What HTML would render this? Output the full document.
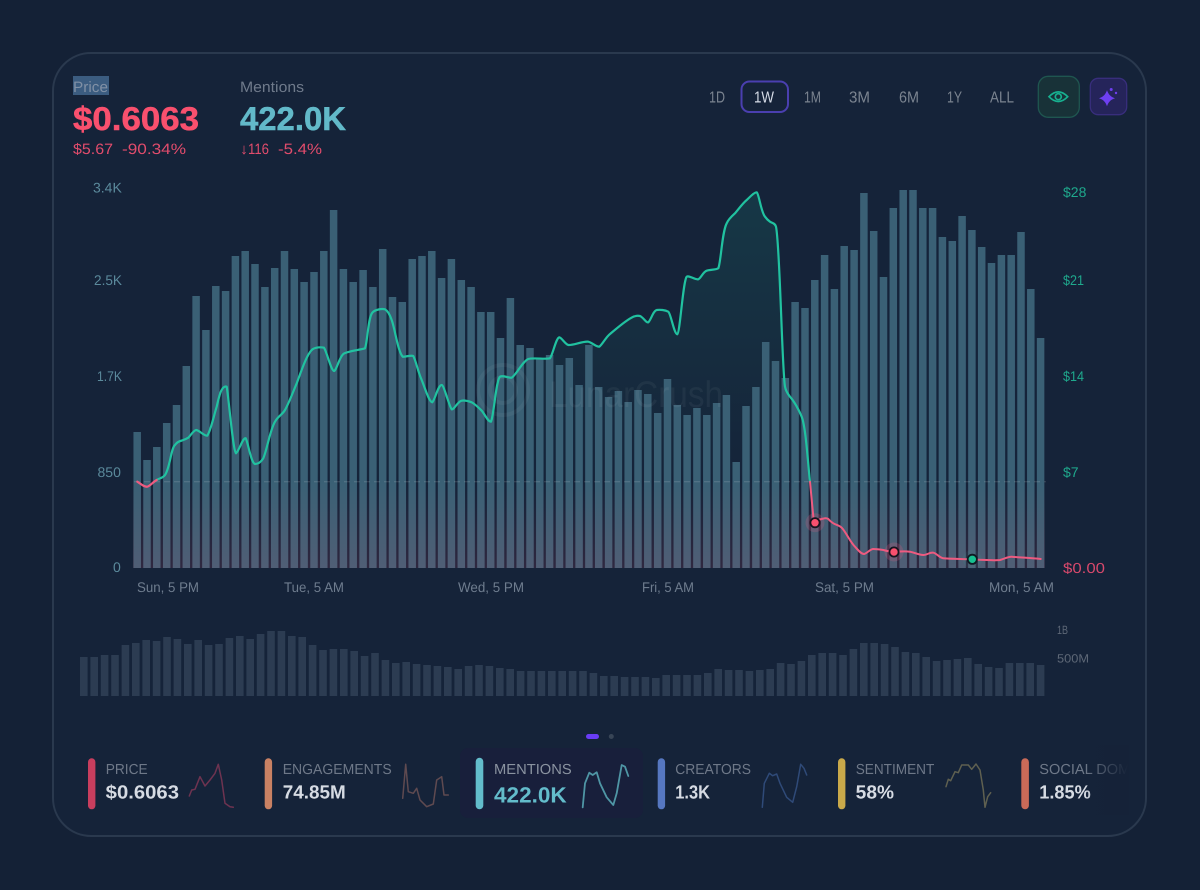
<!DOCTYPE html>
<html lang="en"><head><meta charset="utf-8"><title>Price and Mentions</title>
<style>
html,body{margin:0;padding:0;background:#142136;width:1200px;height:890px;overflow:hidden}
svg{display:block}
text{font-family:"Liberation Sans",sans-serif;text-rendering:geometricPrecision}
</style></head><body>
<svg width="1200" height="890" viewBox="0 0 1200 890" xmlns="http://www.w3.org/2000/svg">
<defs>
<linearGradient id="area" x1="0" y1="192" x2="0" y2="482" gradientUnits="userSpaceOnUse"><stop offset="0" stop-color="#20c4a0" stop-opacity=".13"/><stop offset="1" stop-color="#20c4a0" stop-opacity="0"/></linearGradient>
<linearGradient id="pink" x1="0" y1="482" x2="0" y2="568" gradientUnits="userSpaceOnUse"><stop offset="0" stop-color="#ff5078" stop-opacity="0"/><stop offset="1" stop-color="#ff5078" stop-opacity=".11"/></linearGradient>
<linearGradient id="fade" x1="1085" y1="0" x2="1128" y2="0" gradientUnits="userSpaceOnUse"><stop offset="0" stop-color="#152238" stop-opacity="0"/><stop offset="1" stop-color="#152238"/></linearGradient>
<clipPath id="row"><rect x="60" y="740" width="1068" height="90"/></clipPath>
</defs>
<rect width="1200" height="890" fill="#142136"/>
<rect x="53" y="53" width="1093" height="783" rx="38" fill="#152339" stroke="#2a394e" stroke-width="2"/>

<!-- header -->
<rect x="73" y="76" width="36" height="19" fill="#3b5c80"/>
<text x="73" y="92" font-size="15" fill="#8090a5" textLength="35" lengthAdjust="spacingAndGlyphs">Price</text>
<text x="240" y="92" font-size="15" fill="#6f7a8b" textLength="64" lengthAdjust="spacingAndGlyphs">Mentions</text>
<text x="73" y="130" font-size="33" font-weight="700" fill="#f9506e" stroke="#f9506e" stroke-width=".5" textLength="126" lengthAdjust="spacingAndGlyphs">$0.6063</text>
<text x="240" y="130" font-size="33" font-weight="700" fill="#62b9c9" stroke="#62b9c9" stroke-width=".5" textLength="106" lengthAdjust="spacingAndGlyphs">422.0K</text>
<text x="73" y="154" font-size="15" fill="#e14c6c" textLength="40" lengthAdjust="spacingAndGlyphs">$5.67</text>
<text x="122" y="154" font-size="15" fill="#e14c6c" textLength="64" lengthAdjust="spacingAndGlyphs">-90.34%</text>
<text x="240" y="154" font-size="15" fill="#e14c6c" textLength="8" lengthAdjust="spacingAndGlyphs">↓</text>
<text x="248" y="154" font-size="15" fill="#e14c6c" textLength="21" lengthAdjust="spacingAndGlyphs">116</text>
<text x="278" y="154" font-size="15" fill="#e14c6c" textLength="44" lengthAdjust="spacingAndGlyphs">-5.4%</text>

<!-- time buttons -->
<g font-size="16" fill="#7b8490">
<text x="709" y="102.7" textLength="16" lengthAdjust="spacingAndGlyphs">1D</text>
<text x="804" y="102.7" textLength="17" lengthAdjust="spacingAndGlyphs">1M</text>
<text x="849" y="102.7" textLength="21" lengthAdjust="spacingAndGlyphs">3M</text>
<text x="899" y="102.7" textLength="20" lengthAdjust="spacingAndGlyphs">6M</text>
<text x="947" y="102.7" textLength="15" lengthAdjust="spacingAndGlyphs">1Y</text>
<text x="990" y="102.7" textLength="24" lengthAdjust="spacingAndGlyphs">ALL</text>
</g>
<rect x="741.5" y="81.5" width="46.5" height="30.5" rx="8" fill="none" stroke="#4a3fb0" stroke-width="2"/>
<text x="754" y="102.7" font-size="16" fill="#d5dbe6" textLength="20" lengthAdjust="spacingAndGlyphs">1W</text>
<rect x="1038.3" y="76.3" width="41" height="41" rx="10" fill="#183238" stroke="#1f5650" stroke-width="1.3"/>
<path d="M1049 96.7Q1058.3 87 1067.7 96.7Q1058.3 106.4 1049 96.7Z" fill="none" stroke="#17b08f" stroke-width="1.7"/>
<circle cx="1058.3" cy="96.7" r="3" fill="none" stroke="#17b08f" stroke-width="1.7"/>
<rect x="1090.3" y="78.3" width="36.4" height="36.4" rx="8" fill="#25245a" stroke="#382e7c" stroke-width="1.3"/>
<path d="M1107 90.3C1108.5 94.5 1110.5 96.8 1115 98.3C1110.5 99.8 1108.5 102 1107 106.3C1105.5 102 1103.5 99.8 1099 98.3C1103.5 96.8 1105.5 94.5 1107 90.3Z" fill="#6e3ff0"/>
<circle cx="1111.2" cy="89.5" r="1.5" fill="#6e3ff0"/><circle cx="1116" cy="93" r="1.2" fill="#6e3ff0"/>

<!-- axis labels -->
<g font-size="14" fill="#5b8a9c">
<text x="93" y="192.7">3.4K</text>
<text x="94" y="285" textLength="28" lengthAdjust="spacingAndGlyphs">2.5K</text>
<text x="97" y="381" textLength="25" lengthAdjust="spacingAndGlyphs">1.7K</text>
<text x="97.5" y="477">850</text>
<text x="113" y="572">0</text>
</g>
<g font-size="14" fill="#1fa98d">
<text x="1063" y="197">$28</text>
<text x="1063" y="285" textLength="21" lengthAdjust="spacingAndGlyphs">$21</text>
<text x="1063" y="381" textLength="21" lengthAdjust="spacingAndGlyphs">$14</text>
<text x="1063" y="477">$7</text>
</g>
<text x="1063" y="573" font-size="14.5" fill="#d8496c" textLength="42" lengthAdjust="spacingAndGlyphs">$0.00</text>
<g font-size="14" fill="#6e7c8e">
<text x="137" y="592" textLength="62" lengthAdjust="spacingAndGlyphs">Sun, 5 PM</text>
<text x="284" y="592" textLength="60" lengthAdjust="spacingAndGlyphs">Tue, 5 AM</text>
<text x="458" y="592" textLength="66" lengthAdjust="spacingAndGlyphs">Wed, 5 PM</text>
<text x="642" y="592" textLength="52" lengthAdjust="spacingAndGlyphs">Fri, 5 AM</text>
<text x="815" y="592" textLength="59" lengthAdjust="spacingAndGlyphs">Sat, 5 PM</text>
<text x="989" y="592" textLength="65" lengthAdjust="spacingAndGlyphs">Mon, 5 AM</text>
</g>

<!-- area under price -->
<path d="M137.3 481.7L165 475L175 445L180 441L188.3 437.7L196 430L207.3 435.7L216.7 406.7L221.7 390L226.7 386.7L236 453.3L245.7 438.3L255 464L263.3 458.3L275 421.7L285 410L296.7 383.3L311.7 350L324 347.7L334.3 371L343.3 354L365 348.3L372.3 312.7L385 309.3L391.7 320L402.7 356.7L413.3 356L421.7 380L432.3 402.3L441.7 385L451.7 409.3L461.7 400.7L481.7 410.7L491 421.7L500 376.7L511.7 377.7L528.3 359L550 358.3L559.3 337.3L568.3 345L588.3 341.7L599.3 346.7L610 334L633.3 316.7L640 316L648.3 322.3L656.7 310L668.3 311.7L677.3 334.3L686.7 276.7L698.3 279.3L706.7 270.7L718.3 268.3L726.7 223.3L735 213.3L746.7 200L756.7 192.3L765 216.7L770 221.7L776 226.7L785 386.7L790 396.7L801.7 416.7L810 481.7Z" fill="url(#area)"/>

<!-- main bars -->
<path fill="none" stroke="#3a6075" stroke-width="7.5" d="M137.2 432V568M147 460V568M156.8 447V568M166.7 423V568M176.5 405V568M186.3 366V568M196.1 296V568M205.9 330V568M215.8 286V568M225.6 291V568M235.4 256V568M245.2 251V568M255 264V568M264.9 287V568M274.7 268V568M284.5 251V568M294.3 269V568M304.1 282V568M314 272V568M323.8 251V568M333.6 210V568M343.4 269V568M353.2 282V568M363.1 270V568M372.9 287V568M382.7 249V568M392.5 297V568M402.3 302V568M412.2 259V568M422 256V568M431.8 251V568M441.6 278V568M451.4 259V568M461.3 280V568M471.1 287V568M480.9 312V568M490.7 312V568M500.5 338V568M510.4 298V568M520.2 345V568M530 348V568M539.8 358V568M549.6 355V568M559.5 365V568M569.3 358V568M579.1 385V568M588.9 345V568M598.7 387V568M608.6 397V568M618.4 391V568M628.2 402V568M638 390V568M647.8 394V568M657.7 413V568M667.5 379V568M677.3 405V568M687.1 415V568M696.9 408V568M706.8 415V568M716.6 403V568M726.4 395V568M736.2 462V568M746 406V568M755.9 387V568M765.7 342V568M775.5 361V568M785.3 378V568M795.1 302V568M805 308V568M814.8 280V568M824.6 255V568M834.4 289V568M844.2 246V568M854.1 250V568M863.9 193V568M873.7 231V568M883.5 277V568M893.3 208V568M903.2 190V568M913 190V568M922.8 208V568M932.6 208V568M942.4 237V568M952.3 241V568M962.1 216V568M971.9 230V568M981.7 247V568M991.5 263V568M1001.4 255V568M1011.2 255V568M1021 232V568M1030.8 289V568M1040.6 338V568"/>
<rect x="133" y="482" width="912" height="86" fill="url(#pink)"/>
<line x1="134" y1="481.7" x2="1046" y2="481.7" stroke="#fff" stroke-opacity=".16" stroke-width="1" stroke-dasharray="6 4"/>

<!-- watermark -->
<g opacity=".045" fill="none" stroke="#fff" stroke-width="4"><circle cx="503" cy="390" r="25"/><circle cx="503" cy="390" r="13"/></g>
<text x="549" y="407" font-size="37" fill="#fff" fill-opacity=".05" textLength="174" lengthAdjust="spacingAndGlyphs">LunarCrush</text>

<!-- price line -->
<g fill="none" stroke-width="2.2" stroke-linejoin="round" stroke-linecap="round">
<path stroke="#21c2a0" d="M156.7 480C160 478 163 478 165 475C170 468 171 448 175 445C177 442 180 441 182 440.5C185 439.5 187 438.5 188.3 437.7C191 435 193 431 196 430C199 430 204 436 207.3 435.7C211 430 214 415 216.7 406.7C218 401 220 392 221.7 390C223 387 225.5 386 226.7 386.7C229 400 233 451 236 453.3C239 451 243 437 245.7 438.3C248 442 251 463 255 464C258 464 261 462 263.3 458.3C267 450 270 430 275 421.7C278 416 282 415 285 410C289 403 293 392 296.7 383.3C301 372 306 356 311.7 350C315 347 321 347 324 347.7C327 352 331 371 334.3 371C337 369 339 358 343.3 354C347 351 360 350 365 348.3C367.5 342 368 318 372.3 312.7C375 309.5 382 308.5 385 309.3C388 311 390 315 391.7 320C395 329 398 352 402.7 356.7C405 357 411 355 413.3 356C416 361 418 372 421.7 380C425 388 429 402 432.3 402.3C435 400 438 385 441.7 385C444 385 449 406 451.7 409.3C454 410 458 401 461.7 400.7C465 400 468 401 471.7 402.3C475 404 478 407 481.7 410.7C484 413 488 422 491 421.7C494 415 496 380 500 376.7C503 375 508 378 511.7 377.7C516 375 523 361 528.3 359C533 357.5 546 359.5 550 358.3C553 354 556 338 559.3 337.3C562 338 565 344 568.3 345C573 345.5 583 341 588.3 341.7C592 342.5 596 347 599.3 346.7C602 345 606 337 610 334C616 329 626 320 633.3 316.7C636 315.7 638 315.5 640 316C643 317 646 323 648.3 322.3C651 320 653 311 656.7 310C660 309.5 665 310 668.3 311.7C671 314 674 334 677.3 334.3C680 333 683 281 686.7 276.7C689 275 695 280 698.3 279.3C701 278 703 272 706.7 270.7C710 269.5 716 270 718.3 268.3C721 262 722 232 726.7 223.3C728.5 219 732 216 735 213.3C739 208.5 743 203 746.7 200C749 198 754 192 756.7 192.3C759 194 761 212 765 216.7C767 219.5 769 221 770 221.7C772 223 775 223 776 226.7C780 245 782 370 785 386.7C786 392 788 394 790 396.7C794 401 799 410 801.7 416.7C806 428 808 465 810 481.7"/>
<path stroke="#ee5b80" d="M137.3 481.7C141 484 144 487 147.3 486.7C150 486 153 482 156.7 480"/>
<path stroke="#ee5b80" stroke-width="2" d="M810 481.7L813.3 516.7L815 522.7C817 520 819 519.5 821.7 519C824 518.5 826 517.5 828.3 519C830 521 832 522.5 833.3 523.3C836 525 839 525 841.7 527.7C846 532 850 542 855 546.7C858 550 861 554 864 554C867 553.5 870 549 873.3 549C877 549 880 549.5 883.3 550C887 551 891 552 894 552C899 551.5 905 551 910 551.7C914 552.5 919 555 923.3 555C927 555 930 552 933.3 552.7C937 553.5 939 557.5 943.3 558.3C952 559 963 559 972.3 559.3C977 560 982 560 986.7 560C991 560 996 560.5 1000 560C1004 559 1008 556.5 1011.7 556.7C1020 557.5 1031 558 1040.7 559"/>
</g>
<g>
<circle cx="815" cy="522.7" r="9.5" fill="#ee5b80" opacity=".2"/><circle cx="815" cy="522.7" r="4.6" fill="#f9506e" stroke="#16141f" stroke-width="1.8"/>
<circle cx="894" cy="552" r="9.5" fill="#ee5b80" opacity=".2"/><circle cx="894" cy="552" r="4.6" fill="#f9506e" stroke="#16141f" stroke-width="1.8"/>
<circle cx="972.3" cy="559.3" r="9.5" fill="#21c2a0" opacity=".08"/><circle cx="972.3" cy="559.3" r="4.6" fill="#18c090" stroke="#0f1a22" stroke-width="1.8"/>
</g>

<!-- volume bars -->
<path fill="none" stroke="#2c3c52" stroke-width="7.6" d="M83.8 657V696M94.2 657V696M104.6 655V696M115 655V696M125.4 645V696M135.8 643V696M146.2 640V696M156.6 641V696M167 637V696M177.4 639V696M187.8 644V696M198.2 640V696M208.6 645V696M219 644V696M229.4 638V696M239.8 636V696M250.2 639V696M260.6 634V696M271 631V696M281.4 631V696M291.8 636V696M302.2 637V696M312.6 645V696M323 650V696M333.4 649V696M343.8 649V696M354.2 651V696M364.6 656V696M375 653V696M385.4 660V696M395.8 663V696M406.2 662V696M416.6 664V696M427 665V696M437.4 666V696M447.8 667V696M458.2 669V696M468.6 666V696M479 665V696M489.4 666V696M499.8 668V696M510.2 669V696M520.6 671V696M531 671V696M541.4 671V696M551.8 671V696M562.2 671V696M572.6 671V696M583 671V696M593.4 673V696M603.8 676V696M614.2 676V696M624.6 677V696M635 677V696M645.4 677V696M655.8 678V696M666.2 675V696M676.6 675V696M687 675V696M697.4 675V696M707.8 673V696M718.2 669V696M728.6 670V696M739 670V696M749.4 671V696M759.8 670V696M770.2 669V696M780.6 663V696M791 664V696M801.4 661V696M811.8 655V696M822.2 653V696M832.6 653V696M843 655V696M853.4 649V696M863.8 643V696M874.2 643V696M884.6 644V696M895 647V696M905.4 652V696M915.8 653V696M926.2 657V696M936.6 661V696M947 660V696M957.4 659V696M967.8 658V696M978.2 664V696M988.6 667V696M999 668V696M1009.4 663V696M1019.8 663V696M1030.2 663V696M1040.6 665V696"/>
<text x="1057" y="634" font-size="12" fill="#5e6877" textLength="11" lengthAdjust="spacingAndGlyphs">1B</text>
<text x="1057" y="662.7" font-size="12" fill="#5e6877" textLength="32" lengthAdjust="spacingAndGlyphs">500M</text>

<!-- pager -->
<rect x="586" y="734" width="13" height="5" rx="2.5" fill="#6a3cf5"/>
<circle cx="611.3" cy="736.5" r="2.5" fill="#384556"/>

<!-- metric row -->
<rect x="460" y="748" width="183" height="70" rx="8" fill="#181f3b"/>
<g clip-path="url(#row)">
<rect x="88" y="758.3" width="7.4" height="51" rx="3.7" fill="#c83e5e"/>
<rect x="264.7" y="758.3" width="7.4" height="51" rx="3.7" fill="#c98163"/>
<rect x="475.7" y="757.7" width="7.6" height="51.6" rx="3.8" fill="#63bccb"/>
<rect x="657.7" y="758.3" width="7.4" height="51" rx="3.7" fill="#5677c0"/>
<rect x="838" y="758.3" width="7.4" height="51" rx="3.7" fill="#c9a94a"/>
<rect x="1021.3" y="758.3" width="7.6" height="51" rx="3.8" fill="#c96a58"/>
<g font-size="14.5" fill="#6e7888">
<text x="105.7" y="774" textLength="42" lengthAdjust="spacingAndGlyphs">PRICE</text>
<text x="282.7" y="774" textLength="109" lengthAdjust="spacingAndGlyphs">ENGAGEMENTS</text>
<text x="494" y="774" fill="#8a93a0" textLength="77.7" lengthAdjust="spacingAndGlyphs">MENTIONS</text>
<text x="675.3" y="774" textLength="75.7" lengthAdjust="spacingAndGlyphs">CREATORS</text>
<text x="855.7" y="774" textLength="78.6" lengthAdjust="spacingAndGlyphs">SENTIMENT</text>
<text x="1039.3" y="774" textLength="146" lengthAdjust="spacingAndGlyphs">SOCIAL DOMINANCE</text>
</g>
<g font-size="19" font-weight="700" fill="#d6dbe3">
<text x="105.7" y="798.3" textLength="73.3" lengthAdjust="spacingAndGlyphs">$0.6063</text>
<text x="282.7" y="798.3" textLength="63" lengthAdjust="spacingAndGlyphs">74.85M</text>
<text x="675.3" y="798.3" textLength="34.7" lengthAdjust="spacingAndGlyphs">1.3K</text>
<text x="855.7" y="798.3" textLength="38.3" lengthAdjust="spacingAndGlyphs">58%</text>
<text x="1039.3" y="798.3" textLength="51.4" lengthAdjust="spacingAndGlyphs">1.85%</text>
</g>
<text x="494" y="802.7" font-size="22" font-weight="700" fill="#63bccb" textLength="72.7" lengthAdjust="spacingAndGlyphs">422.0K</text>
<g fill="none" stroke-width="1.5" stroke-linejoin="round" stroke-linecap="round">
<path stroke="#6e3350" d="M189.3 796L191.7 790L195 789.3L200 776.7L205 786L210 780L215 773.3L218.3 764.3L221.7 780L225 803.3L230 806.7L233.3 807.3"/>
<path stroke="#5f4a50" d="M402.7 798.3L405.7 764.3L408.3 791.7L413.3 793.3L416.7 788.3L420 800L421.7 801.7L426.7 806.7L433.3 804L436.7 780L441.7 776.7L444 795L448.3 795"/>
<path stroke="#4f96a5" stroke-width="1.8" d="M582.7 807.3L585 783.3L589.3 772.7L592.7 775L596.7 772.3L600 783.3L606.7 797.3L613.3 805L616.7 793.3L621.7 765L625 766.7L628.3 776"/>
<path stroke="#2f4a78" d="M762.3 807.3L764.3 783.3L769.3 773.3L772.7 775.7L776.7 774L780 783.3L786.7 797.3L792.7 802.3L796.7 786.7L800.7 764.3L804 768.3L806.7 775"/>
<path stroke="#5f6050" d="M946 786.7L948.3 779.3L950.7 780.7L955 771.7L958.3 772.7L961.7 765L968.3 765L971.7 769.3L976 764L980 770L983.3 790L985 807.3L987.7 796.7L990.7 792.7"/>
</g>
</g>
<rect x="1085" y="745" width="44" height="70" fill="url(#fade)"/>
</svg>
</body></html>
